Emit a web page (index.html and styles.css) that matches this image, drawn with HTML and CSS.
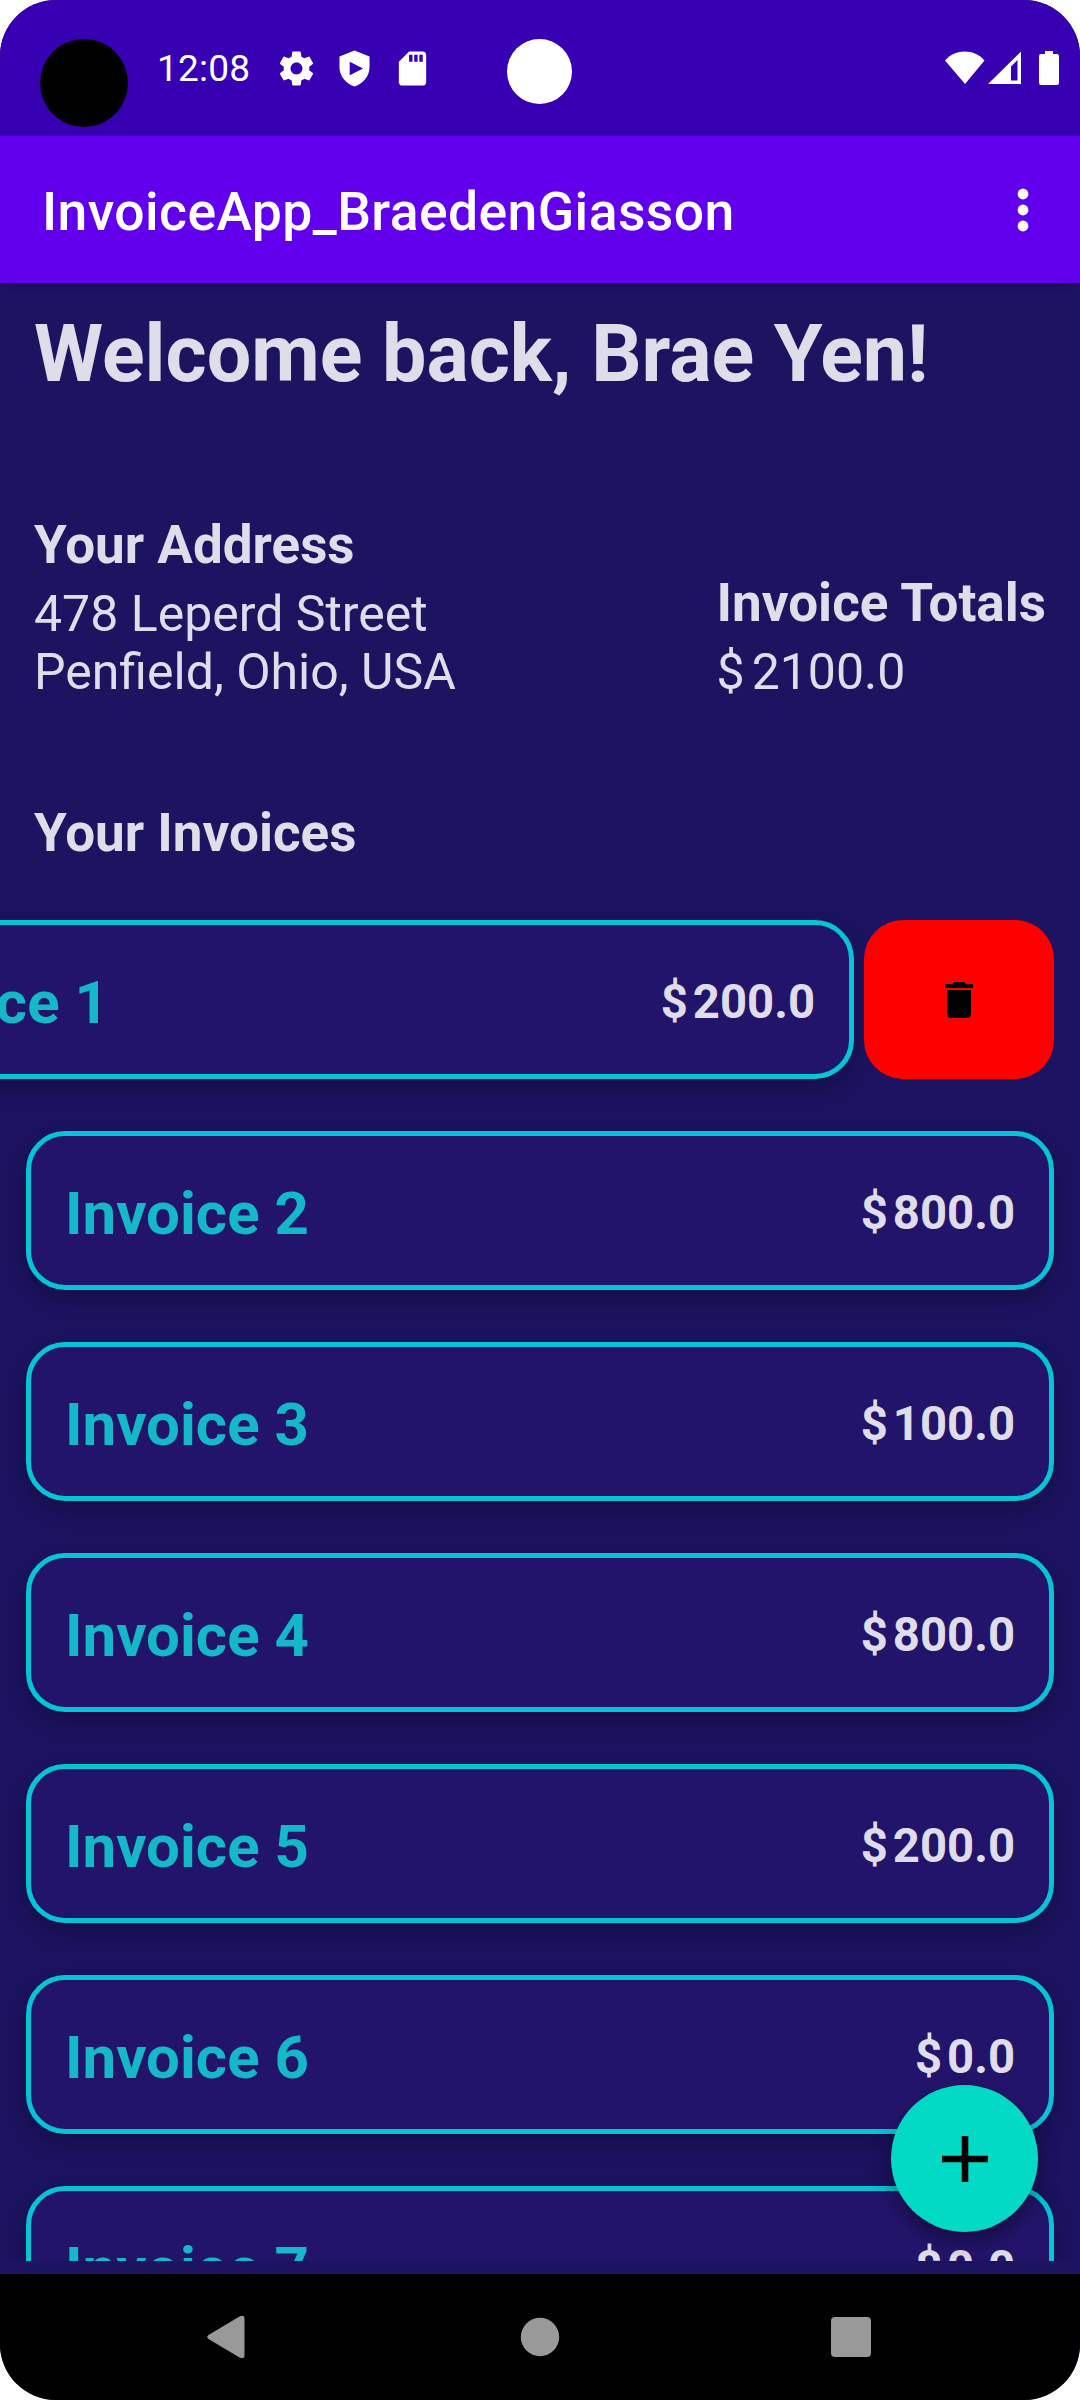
FILE: index.html
```html
<!DOCTYPE html>
<html lang="en">
<head>
<meta charset="utf-8">
<title>InvoiceApp</title>
<link rel="stylesheet" href="styles.css">
</head>
<body>
<div class="screen">
  <header class="status-bar">
    <span class="camera"></span>
    <span class="clock">12:08</span>
    <span class="status-icons">
      <svg class="status-icon" viewBox="0 0 24 24"><path d="M19.43 12.98c.04-.32.07-.64.07-.98s-.03-.66-.07-.98l2.11-1.65c.19-.15.24-.42.12-.64l-2-3.46c-.12-.22-.39-.3-.61-.22l-2.49 1c-.52-.4-1.08-.73-1.69-.98l-.38-2.65A.488.488 0 0 0 14 2h-4c-.25 0-.46.18-.49.42l-.38 2.65c-.61.25-1.17.59-1.69.98l-2.49-1c-.23-.09-.49 0-.61.22l-2 3.46c-.13.22-.07.49.12.64l2.11 1.65c-.04.32-.07.65-.07.98s.03.66.07.98l-2.11 1.65c-.19.15-.24.42-.12.64l2 3.46c.12.22.39.3.61.22l2.49-1c.52.4 1.08.73 1.69.98l.38 2.65c.03.24.24.42.49.42h4c.25 0 .46-.18.49-.42l.38-2.65c.61-.25 1.17-.59 1.69-.98l2.49 1c.23.09.49 0 .61-.22l2-3.46c.12-.22.07-.49-.12-.64l-2.11-1.65zM12 15.5c-1.93 0-3.5-1.57-3.5-3.5s1.57-3.5 3.5-3.5 3.500 1.570 3.500 3.500-1.570 3.500-3.500 3.500z"/></svg>
      <svg class="status-icon" viewBox="0 0 24 24"><path fill-rule="evenodd" d="M12 1.400 3.200 5v6.300c0 5.100 3.700 9.600 8.800 11.300 5.100-1.700 8.800-6.200 8.800-11.300V5zM9.200 8.100v7.800L17 12z"/></svg>
      <svg class="status-icon" viewBox="0 0 24 24"><path d="M18 2h-8L4.020 8 4 20c0 1.100.9 2 2 2h12c1.100 0 2-.9 2-2V4c0-1.100-.9-2-2-2zm-6 6h-2V4h2v4zm3 0h-2V4h2v4zm3 0h-2V4h2v4z"/></svg>
    </span>
    <span class="cutout"></span>
    <span class="system-icons">
      <svg width="40" height="34" viewBox="0 0 40 34"><path d="M0 9.500C10-2.500 29.500-2.500 39.500 9.500L20 33z"/></svg>
      <svg width="33" height="34" viewBox="0 0 33 34"><path fill-rule="evenodd" d="M33 .5V33H0zM29.500 9v20.500h-6.500V15.500z"/></svg>
      <svg class="battery" width="20" height="34" viewBox="0 0 20 34"><path d="M6 0h8v3h4q2 0 2 2v27q0 2-2 2H2q-2 0-2-2V5q0-2 2-2h4z"/></svg>
    </span>
  </header>
  <div class="app-bar">
    <h1 class="app-title">InvoiceApp_BraedenGiasson</h1>
    <svg class="overflow" width="12" height="44" viewBox="0 0 12 44"><circle cx="6" cy="6" r="5.400"/><circle cx="6" cy="22" r="5.400"/><circle cx="6" cy="38" r="5.400"/></svg>
  </div>
  <main class="content">
    <h2 class="welcome">Welcome back, Brae Yen!</h2>
    <section class="summary">
      <div class="block">
        <h3 class="label">Your Address</h3>
        <p class="value">478 Leperd Street<br>Penfield, Ohio, USA</p>
      </div>
      <div class="block">
        <h3 class="label">Invoice Totals</h3>
        <p class="value money"><span>$</span><span>2100.0</span></p>
      </div>
    </section>
    <h3 class="label list-heading">Your Invoices</h3>
    <div class="list">
      <div class="row swiped">
        <div class="card"><span class="name">Invoice 1</span><span class="money price"><span>$</span><span>200.0</span></span></div>
        <div class="delete"><svg width="48" height="48" viewBox="0 0 24 24"><path d="M6 19c0 1.100.9 2 2 2h8c1.100 0 2-.9 2-2V7H6v12zM19 4h-3.500l-1-1h-5l-1 1H5v2h14V4z"/></svg></div>
      </div>
      <div class="row"><div class="card"><span class="name">Invoice 2</span><span class="money price"><span>$</span><span>800.0</span></span></div></div>
      <div class="row"><div class="card"><span class="name">Invoice 3</span><span class="money price"><span>$</span><span>100.0</span></span></div></div>
      <div class="row"><div class="card"><span class="name">Invoice 4</span><span class="money price"><span>$</span><span>800.0</span></span></div></div>
      <div class="row"><div class="card"><span class="name">Invoice 5</span><span class="money price"><span>$</span><span>200.0</span></span></div></div>
      <div class="row"><div class="card"><span class="name">Invoice 6</span><span class="money price"><span>$</span><span>0.0</span></span></div></div>
      <div class="row"><div class="card"><span class="name">Invoice 7</span><span class="money price"><span>$</span><span>0.0</span></span></div></div>
    </div>
    <div class="fab"><svg width="46" height="46" viewBox="0 0 46 46"><path d="M19.700 0h6.600v19.700H46v6.600H26.300V46h-6.600V26.300H0v-6.600h19.700z"/></svg></div>
  </main>
  <nav class="nav-bar">
    <svg width="38" height="44" viewBox="0 0 38 44"><path d="M32.500 1.500Q37.500-1 37.500 4v36q0 5-5 2.500L1.500 24q-2.500-2 0-4z"/></svg>
    <svg class="home" width="40" height="40" viewBox="0 0 40 40"><circle cx="20" cy="20" r="19.200"/></svg>
    <svg width="40" height="40" viewBox="0 0 40 40"><rect width="40" height="40" rx="4"/></svg>
  </nav>
</div>
</body>
</html>
```

FILE: styles.css
```css
* { box-sizing: border-box; }

body {
  margin: 0;
  background: #fff;
  font-family: Roboto, sans-serif;
}

h1, h2, h3, p { margin: 0; }
svg { display: block; flex: none; }

.screen {
  display: flex;
  flex-direction: column;
  width: 1080px;
  height: 2400px;
  border-radius: 56px;
  overflow: hidden;
  background: #1c1361;
  color: #e0ddea;
}

.status-bar {
  position: relative;
  display: flex;
  align-items: center;
  height: 136px;
  padding: 0 21px 0 40px;
  background: #3700b3;
  color: #fff;
  fill: #fff;
}

.camera {
  width: 88px;
  height: 88px;
  margin-top: 30px;
  border-radius: 50%;
  background: #000;
}

.clock {
  margin-top: 2px;
  margin-left: 29px;
  font-size: 37px;
  line-height: 44px;
  letter-spacing: .2px;
}

.status-icons {
  display: flex;
  gap: 17px;
  margin-left: 26px;
}

.status-icon { width: 41px; height: 41px; }

.cutout {
  position: absolute;
  left: 507px;
  top: 39px;
  width: 65px;
  height: 65px;
  border-radius: 50%;
  background: #fff;
}

.system-icons {
  display: flex;
  gap: 3px;
  margin-left: auto;
}

.battery { margin-left: 15px; }

.app-bar {
  position: relative;
  display: flex;
  align-items: center;
  justify-content: space-between;
  height: 147px;
  flex: none;
  padding: 0 51px 0 42px;
  background: #6200ee;
  /* spread is negative so the shadow falls only below the bar */
  box-shadow: 0 8px 8px -6px rgba(0, 0, 0, .2);
  color: #fff;
  fill: #fff;
}

.app-title {
  padding-top: 4px;
  font-size: 53.5px;
  font-weight: 500;
  line-height: 62px;
  letter-spacing: .4px;
}

.content {
  position: relative;
  display: flex;
  flex-direction: column;
  height: 1991px;
  padding-bottom: 13px;
}

.welcome {
  padding: 25px 34px 0;
  font-size: 79px;
  line-height: 92px;
}

.summary {
  display: flex;
  justify-content: space-between;
  align-items: flex-end;
  height: 301px;
  padding: 0 34px 0 34px;
}

.label {
  font-size: 53px;
  line-height: 62px;
}

.value {
  margin-top: 9px;
  font-size: 50px;
  line-height: 58px;
}

.money { display: flex; gap: 7px; }

.list-heading { margin: 101px 34px 0; }

.list {
  flex: 1;
  margin-top: 17px;
  padding: 39px 26px 0;
  min-height: 0;
  overflow: hidden;
}

.row {
  display: flex;
  gap: 10px;
  margin-bottom: 52px;
}

.swiped { margin-left: -200px; }

.card {
  display: flex;
  align-items: center;
  justify-content: space-between;
  flex: none;
  width: 1028px;
  height: 159px;
  padding: 0 34px;
  border: 5px solid #05c4d3;
  border-radius: 39px;
  background: #23146b;
  box-shadow: 0 10px 24px rgba(0, 0, 0, .25);
}

.name {
  padding-top: 5px;
  color: #14b8c8;
  font-size: 60px;
  font-weight: 700;
}

.price {
  gap: 5px;
  padding-top: 5px;
  font-size: 47.25px;
  font-weight: 700;
}

.delete {
  display: flex;
  align-items: center;
  justify-content: center;
  flex: none;
  width: 190px;
  height: 159px;
  border-radius: 39px;
  background: #f00;
}

.fab {
  position: absolute;
  right: 42px;
  bottom: 42px;
  display: flex;
  align-items: center;
  justify-content: center;
  width: 147px;
  height: 147px;
  border-radius: 50%;
  background: #03dac5;
  box-shadow: 0 10px 22px rgba(0, 0, 0, .35);
}

.nav-bar {
  display: flex;
  align-items: center;
  justify-content: space-between;
  height: 126px;
  padding: 0 209px 0 207px;
  background: #000;
  fill: #999;
}

.home { margin-left: 4px; }
```
